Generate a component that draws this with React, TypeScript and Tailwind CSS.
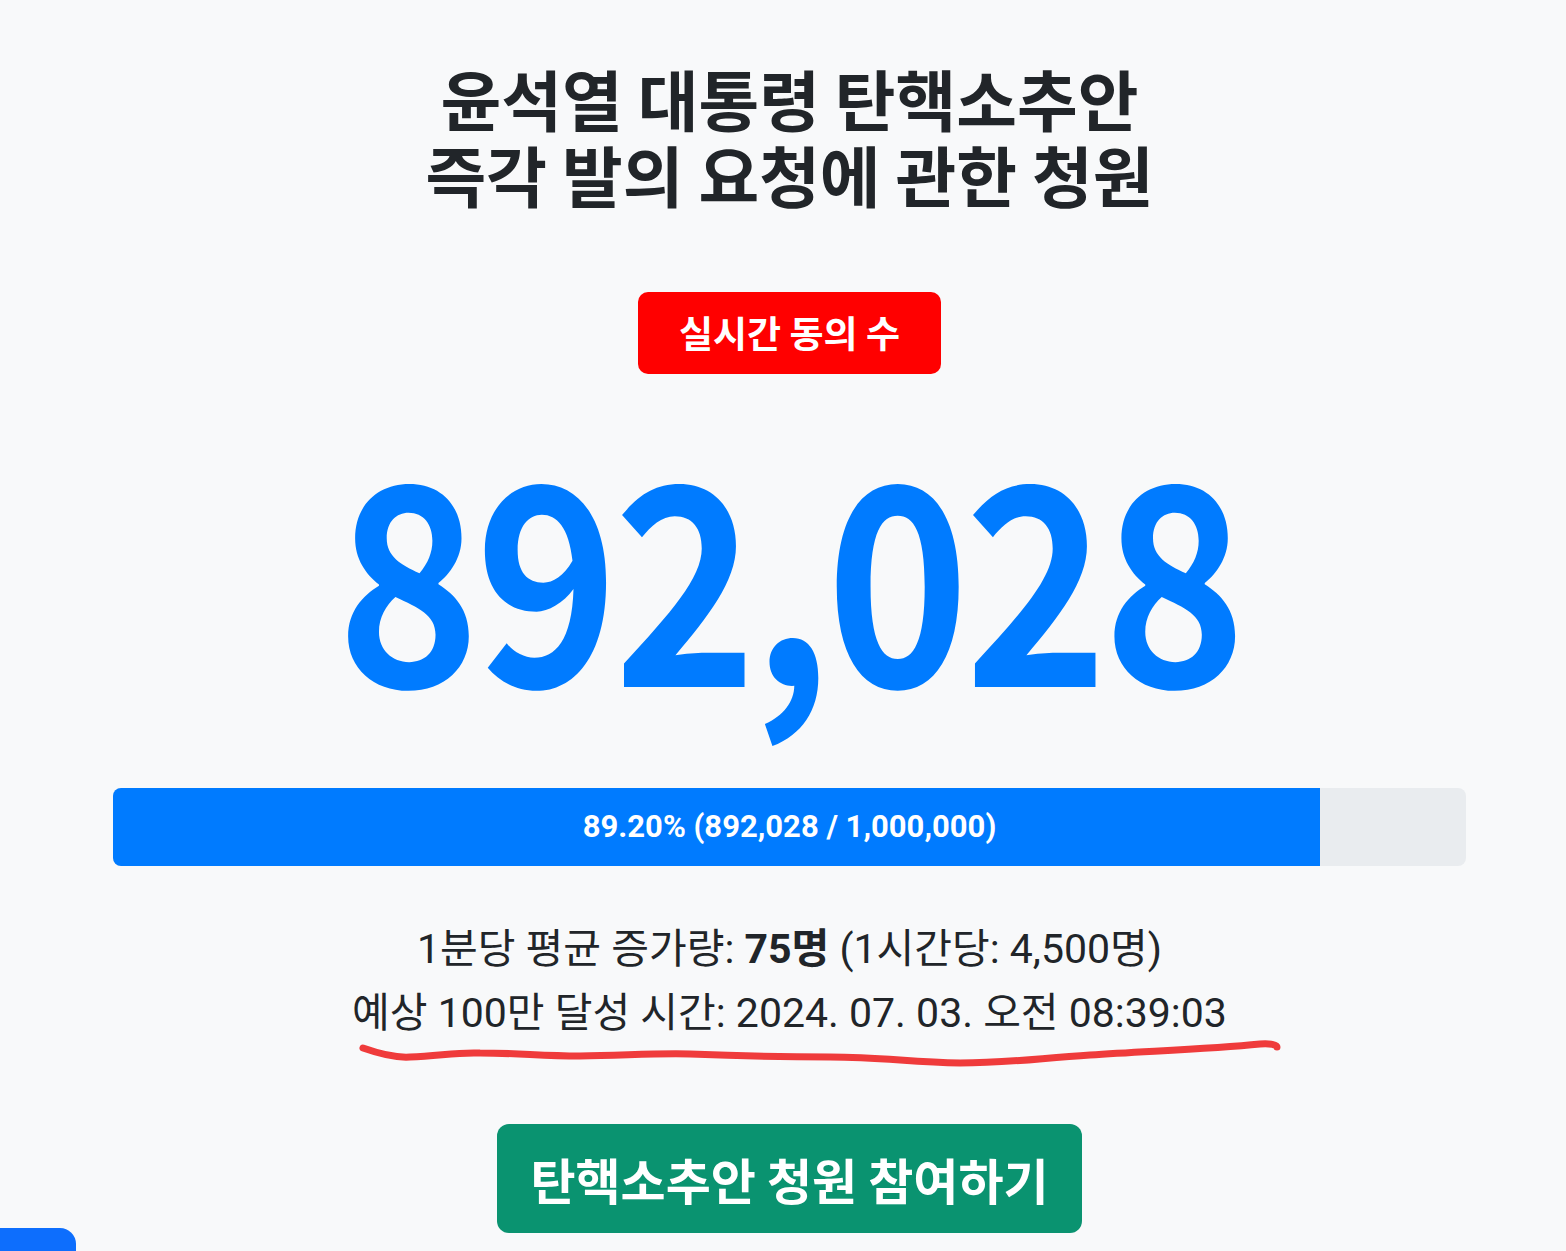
const TARGET = 1000000;
const COUNT = 892028;

const fmt = (n: number) => n.toLocaleString("en-US");

export default function App() {
  const percent = (COUNT / TARGET) * 100;

  return (
    <div className="relative min-h-[1251px] overflow-hidden bg-[#f8f9fa] pl-[113px] pr-[100px] text-[#212529] font-['Roboto','Noto_Sans_CJK_KR',sans-serif]">
      {/* Title */}
      <h1 className="pt-[59px] text-center text-[66px] font-bold leading-[76px] font-['Noto_Sans_CJK_KR',sans-serif]">
        <span className="block">윤석열 대통령 탄핵소추안</span>
        <span className="block">즉각 발의 요청에 관한 청원</span>
      </h1>

      {/* Live badge */}
      <div className="mt-[81px] flex justify-center">
        <div className="flex h-[82px] items-center rounded-[10px] bg-[#ff0000] px-[41px] text-[37px] font-bold text-white font-['Noto_Sans_CJK_KR',sans-serif]">
          실시간 동의 수
        </div>
      </div>

      {/* Counter */}
      <div className="mt-[55px] flex justify-center">
        <span className="inline-block scale-x-[0.88] text-[276px] font-bold leading-none tracking-[-0.02em] text-[#007bff] font-['Noto_Sans_CJK_KR',sans-serif]">
          {fmt(COUNT)}
        </span>
      </div>

      {/* Progress */}
      <div className="relative mt-[83px] h-[78px] overflow-hidden rounded-[8px] bg-[#e9ecef]">
        <div className="h-full bg-[#007bff]" style={{ width: `${percent}%` }} />
        <div className="absolute inset-0 flex items-center justify-center text-[31px] font-bold text-white">
          {percent.toFixed(2)}% ({fmt(COUNT)} / {fmt(TARGET)})
        </div>
      </div>

      {/* Stats */}
      <div className="mt-[51px] text-center text-[41px] leading-[64px]">
        <p>
          1분당 평균 증가량: <b className="font-bold">75명</b> (1시간당: 4,500명)
        </p>
        <p>예상 100만 달성 시간: 2024. 07. 03. 오전 08:39:03</p>
      </div>

      {/* Join button */}
      <div className="mt-[79px] flex justify-center">
        <button className="flex h-[109px] w-[585px] items-center justify-center rounded-[12px] bg-[#0a9370] text-[49px] font-bold text-white font-['Noto_Sans_CJK_KR',sans-serif]">
          탄핵소추안 청원 참여하기
        </button>
      </div>

      {/* Hand-drawn underline */}
      <svg
        className="pointer-events-none absolute left-[350px] top-[1030px]"
        width="940"
        height="45"
        viewBox="350 1030 940 45"
        fill="none"
      >
        <path
          d="M363 1048 C380 1054 395 1058 410 1057 C440 1056 455 1052 480 1053 C520 1053 540 1056 580 1056 C620 1056 650 1053 690 1054 C740 1056 780 1057 830 1057 C880 1057 910 1062 960 1063 C1010 1063 1040 1058 1090 1055 C1150 1051 1210 1049 1260 1044 C1270 1043 1277 1045 1277 1047"
          stroke="#ef3b3b"
          strokeWidth="7"
          strokeLinecap="round"
          strokeLinejoin="round"
        />
      </svg>

      {/* Floating corner button */}
      <div className="absolute left-0 top-[1228px] h-[40px] w-[76px] rounded-tr-[16px] bg-[#0d6efd]" />
    </div>
  );
}
